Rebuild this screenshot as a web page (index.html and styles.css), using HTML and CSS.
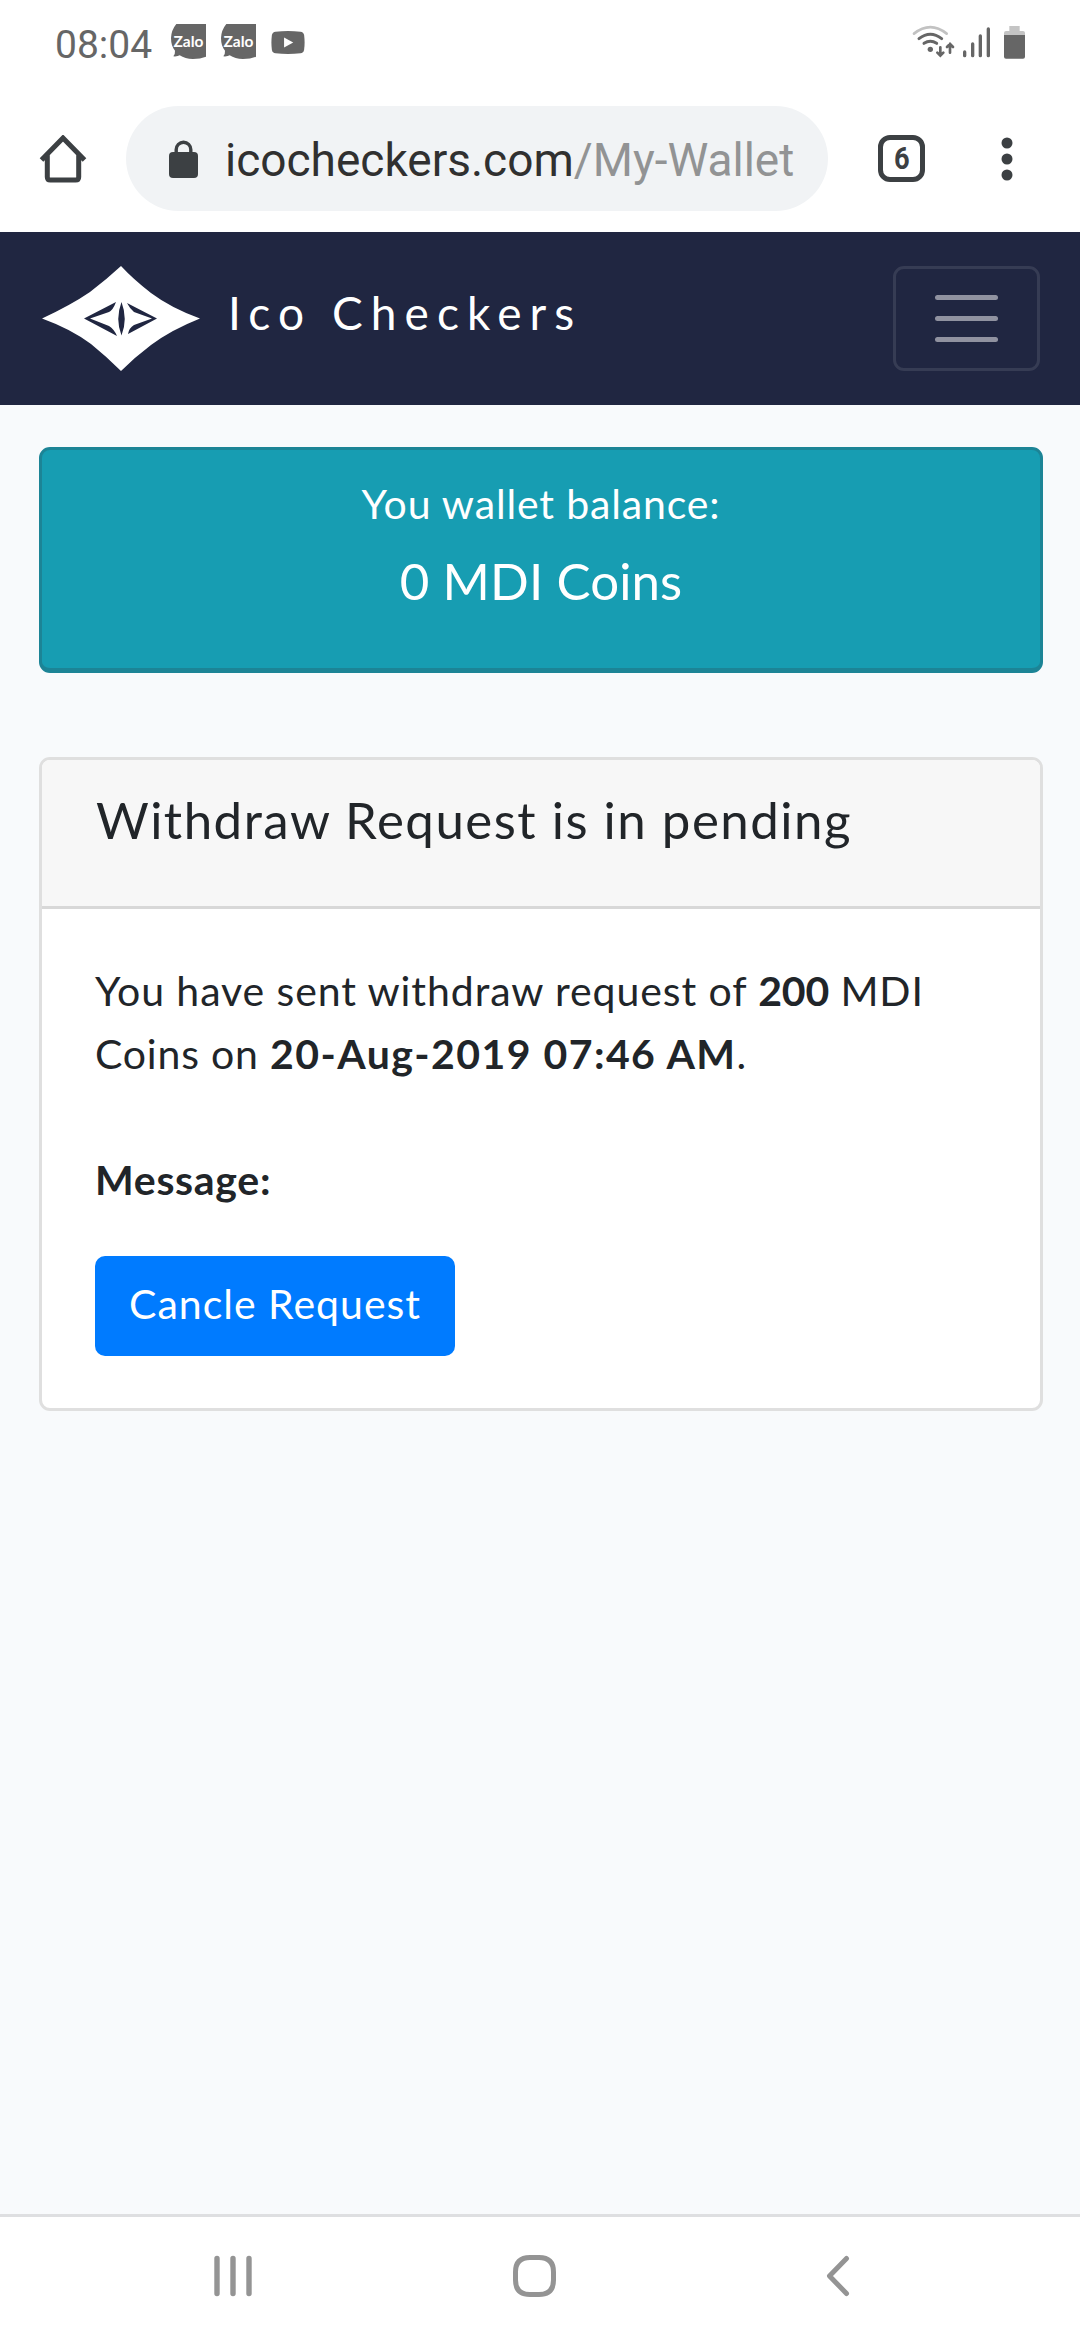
FILE: index.html
```html
<!DOCTYPE html>
<html lang="en">
<head>
<meta charset="utf-8">
<title>Ico Checkers</title>
<link rel="stylesheet" href="styles.css">
</head>
<body>
<div class="screen">
  <header class="status">
    <span class="clock">08:04</span>
    <span class="zalo"><svg viewBox="0 0 105 105"><path d="M16 0H105V98Q88 105 66 105Q42 105 26 94Q20 98 7 97Q13 90 12 80Q0 66 0 42Q1 18 16 0Z" fill="#666"/></svg><b>Zalo</b></span>
    <span class="zalo"><svg viewBox="0 0 105 105"><path d="M16 0H105V98Q88 105 66 105Q42 105 26 94Q20 98 7 97Q13 90 12 80Q0 66 0 42Q1 18 16 0Z" fill="#666"/></svg><b>Zalo</b></span>
    <svg class="youtube" viewBox="0 0 102 70"><path d="M13 2Q51-2 89 2Q98 3 100 12Q103 35 100 58Q98 67 89 68Q51 72 13 68Q4 67 2 58Q-1 35 2 12Q4 3 13 2Z" fill="#666"/><path d="M39 20L67 35L39 50Z" fill="#fff"/></svg>
    <svg class="signals" viewBox="0 0 480 210">
      <g fill="none" stroke-linecap="round" stroke-width="8">
        <path d="M72 71Q121 32 170 71" stroke="#c2c2c2"/>
        <path d="M87 86Q121 60 155 86M102 100Q121 88 140 100" stroke="#666" stroke-width="9"/>
        <path d="M151 112V136M142 128L151 137L160 128M180 128V102M171 111L180 102L189 111" stroke="#666" stroke-width="8"/>
        <path d="M224 126V137M248 102V137M271 78V137M295 57V137" stroke="#666" stroke-width="10"/>
      </g>
      <circle cx="121" cy="118" r="8" fill="#666"/>
      <path d="M358 48H389V63H399Q405 63 405 69V76H342V69Q342 63 348 63H358Z" fill="#c4c4c4"/>
      <path d="M342 75H405V140Q405 146 399 146H348Q342 146 342 140Z" fill="#666"/>
    </svg>
  </header>

  <div class="toolbar">
    <svg class="home" viewBox="0 0 48 48"><path d="M2.5 25L24 3L45.500 25M8.300 20V42Q8.300 45 11.300 45H36.700Q39.700 45 39.700 42V20" fill="none" stroke="#3c4043" stroke-width="5"/></svg>
    <div class="address">
      <svg class="lock" viewBox="0 0 29 38"><rect y="12" width="29" height="26" rx="4" fill="#3c4043"/><path d="M7.200 15V9.500a7.300 7.300 0 0 1 14.600 0V15" fill="none" stroke="#3c4043" stroke-width="3.400"/></svg>
      <span class="url">icocheckers.com<span class="path">/My-Wallet</span></span>
    </div>
    <div class="tabs"><span>6</span></div>
    <svg class="more" viewBox="0 0 12 44"><g fill="#3c4043"><circle cx="6" cy="6" r="5.500"/><circle cx="6" cy="22" r="5.500"/><circle cx="6" cy="38" r="5.500"/></g></svg>
  </div>

  <nav class="navbar">
    <svg class="logo" viewBox="0 0 158 105">
      <path d="M79 0Q91 13 109 27Q129 42 158 52.500Q129 64 109 79Q93 91 79 105Q65 91 49 78Q29 63 0 52.500Q29 39 48 26Q65 13 79 0Z" fill="#fff"/>
      <path fill="#202641" d="M42 52.500L74 36Q71 44 67 46L48 52.500L67 60Q72 63 75 70ZM79.500 36Q86 53 79.500 69.500Q73 53 79.500 36ZM85 37L115 52.500L86 68Q87 62 92 59L110 52.500L92 46Q88 43 85 37Z"/>
    </svg>
    <span class="brand">Ico Checkers</span>
    <button class="toggler" aria-label="Menu"><i></i><i></i><i></i></button>
  </nav>

  <main class="content">
    <section class="alert">
      <p class="label">You wallet balance:</p>
      <h4 class="amount">0 MDI Coins</h4>
    </section>
    <section class="card">
      <h4 class="card-header"><span>Withdraw Request is in pending</span></h4>
      <div class="card-body">
        <p class="line1">You have sent withdraw request of <b>200</b> MDI</p>
        <p class="line2">Coins on <b>20-Aug-2019 07:46 AM</b>.</p>
        <p class="message"><b>Message:</b></p>
        <button class="cancel">Cancle Request</button>
      </div>
    </section>
  </main>

  <footer class="keys">
    <svg class="recents" viewBox="0 0 38 42"><path d="M3 3.500V38.500M19 3.500V38.500M35 3.500V38.500" stroke="#949494" stroke-width="5.400" stroke-linecap="round"/></svg>
    <svg class="homekey" viewBox="0 0 43 42"><path d="M21.500 2.500H26Q40.500 2.500 40.500 17V25Q40.500 39.500 26 39.500H17Q2.500 39.500 2.500 25V17Q2.500 2.500 17 2.500Z" fill="none" stroke="#949494" stroke-width="5"/></svg>
    <svg class="back" viewBox="0 0 24 42"><path d="M20.500 3.500L3.500 21L20.500 38.500" fill="none" stroke="#949494" stroke-width="5" stroke-linecap="round" stroke-linejoin="round"/></svg>
  </footer>
</div>
</body>
</html>
```
FILE: styles.css
```css
* { box-sizing: border-box; }
body, p, h4 { margin: 0; }
body { background: #f8fafc; color: #212529; font-family: Lato, "Noto Sans", sans-serif; }
svg { display: block; flex: none; }
button { font: inherit; border: 0; padding: 0; }
.screen { width: 1080px; height: 2340px; display: flex; flex-direction: column; overflow: hidden; }

.status { height: 84px; flex: none; background: #fff; display: flex; align-items: flex-start; padding: 24px 30px 0 55px; }
.clock { font: 400 39px/42px Roboto, sans-serif; color: #666; width: 116px; white-space: nowrap; }
.zalo { display: grid; width: 35px; height: 35px; margin-right: 15px; }
.zalo > * { grid-area: 1 / 1; }
.zalo b { font: 700 15.5px/34px Lato, sans-serif; color: #fff; text-align: center; }
.youtube { width: 34px; height: 23px; margin-top: 7px; }
.signals { width: 160px; height: 70px; margin: -14px 0 0 auto; }

.toolbar { height: 148px; flex: none; background: #fff; display: flex; align-items: center; padding: 1px 67px 0 39px; }
.home { width: 48px; height: 48px; margin-right: 39px; }
.address { width: 702px; height: 105px; border-radius: 53px; background: #f1f3f5; display: flex; align-items: center; padding-left: 43px; }
.lock { width: 29px; height: 38px; }
.url { font: 400 46px/60px Roboto, sans-serif; color: #303030; margin-left: 27px; padding-top: 3px; white-space: nowrap; }
.path { color: #929394; }
.tabs { width: 47px; height: 47px; margin-left: 50px; border: 5px solid #3c4043; border-radius: 12px; display: flex; align-items: center; justify-content: center; font: 700 31px/37px Roboto, sans-serif; color: #3c4043; }
.tabs span { transform: scaleX(.88); }
.more { width: 12px; height: 44px; margin-left: auto; }

.navbar { height: 173px; flex: none; background: #202641; display: flex; align-items: center; padding: 0 40px 0 42px; }
.logo { width: 158px; height: 105px; }
.brand { color: #fff; font-weight: 400; font-size: 46px; line-height: 60px; letter-spacing: 8.1px; margin: -11px 0 0 28px; white-space: nowrap; }
.toggler { width: 147px; height: 105px; margin-left: auto; border: 3px solid rgba(255,255,255,.1); border-radius: 11px; background: none; display: flex; flex-direction: column; align-items: center; justify-content: center; gap: 16px; }
.toggler i { width: 63px; height: 5px; border-radius: 3px; background: #9092a0; }

.content { flex: 1; padding: 42px 37px 0 39px; }
.alert { height: 226px; border: 3px solid #1c8496; border-bottom-width: 5px; border-radius: 11px; background: #179db2; color: #fff; text-align: center; padding-top: 22px; white-space: nowrap; }
.label { font-size: 41px; line-height: 63px; letter-spacing: .85px; }
.amount { font-weight: 400; font-size: 51px; line-height: 63px; margin-top: 14px; letter-spacing: .1px; }
.card { height: 654px; margin-top: 84px; border: 3px solid #dfdfdf; border-radius: 11px; background: #fff; overflow: hidden; white-space: nowrap; }
.card-header { height: 149px; background: #f7f7f7; border-bottom: 3px solid #d8d8d8; padding: 28px 0 0 54px; font-weight: 400; font-size: 51px; line-height: 63px; letter-spacing: 1.5px; }
.card-body { padding: 50px 53px; font-size: 41px; line-height: 63px; }
.line1 { letter-spacing: .92px; }
.line1 b { letter-spacing: -.2px; }
.line2 { letter-spacing: .8px; }
.line2 b { letter-spacing: 1.45px; }
.message { margin-top: 63px; letter-spacing: .7px; }
.cancel { display: block; width: 360px; height: 100px; margin-top: 45px; padding-bottom: 6px; border-radius: 10px; background: #007bff; color: #fff; letter-spacing: 1px; }

.keys { height: 126px; flex: none; background: #fff; border-top: 3px solid #dedfe1; display: flex; align-items: center; padding: 0 230px 5px 214px; }
.recents { width: 38px; height: 42px; }
.homekey { width: 43px; height: 42px; margin-left: 261px; }
.back { width: 24px; height: 42px; margin-left: auto; }
```
